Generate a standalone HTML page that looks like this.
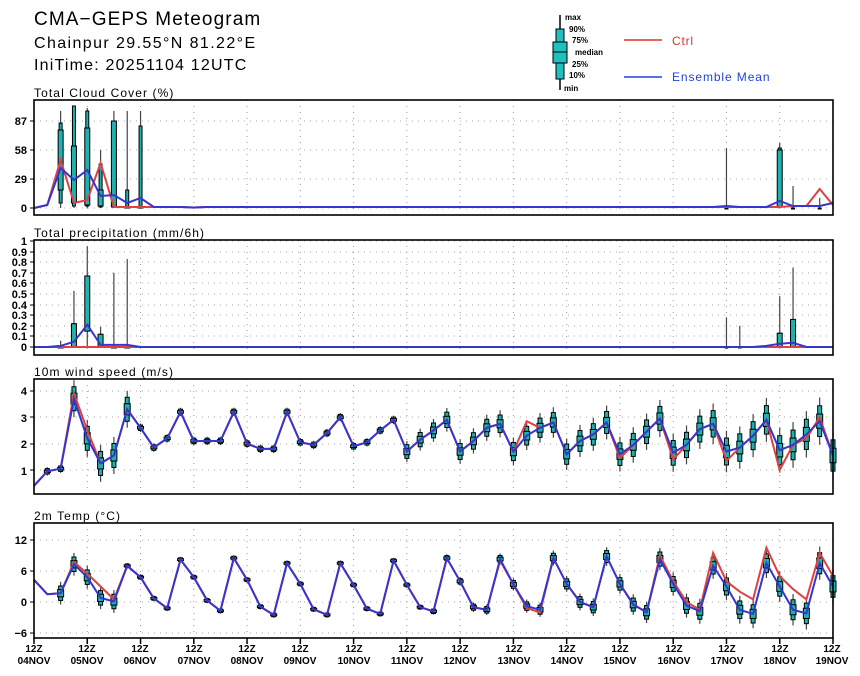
<!DOCTYPE html>
<html><head><meta charset="utf-8">
<style>
html,body{margin:0;padding:0;background:#fff;}
body{width:860px;height:676px;overflow:hidden;position:relative;font-family:"Liberation Sans","DejaVu Sans",sans-serif;}
svg{position:absolute;left:0;top:0;}
text{font-family:"Liberation Sans","DejaVu Sans",sans-serif;}
</style></head><body>
<svg id="s" width="860" height="676" viewBox="0 0 860 676">
<text x="34" y="25" font-size="19" letter-spacing="1.1" fill="#000">CMA−GEPS Meteogram</text>
<text x="34" y="48" font-size="16" letter-spacing="1.4" fill="#000">Chainpur 29.55°N 81.22°E</text>
<text x="34" y="70" font-size="16" letter-spacing="1.2" fill="#000">IniTime: 20251104 12UTC</text>
<g font-size="12" letter-spacing="1.1" fill="#000">
<text x="34" y="97">Total Cloud Cover (%)</text>
<text x="34" y="237">Total precipitation (mm/6h)</text>
<text x="34" y="376">10m wind speed (m/s)</text>
<text x="34" y="520">2m Temp (°C)</text>
</g>
<g font-size="11" font-weight="bold" text-anchor="end" fill="#000">
<text x="27" y="125">87</text><text x="27" y="154">58</text><text x="27" y="183">29</text><text x="27" y="212">0</text>
<text x="27" y="245">1</text><text x="27" y="256">0.9</text><text x="27" y="266">0.8</text><text x="27" y="277">0.7</text><text x="27" y="287">0.6</text><text x="27" y="298">0.5</text><text x="27" y="309">0.4</text><text x="27" y="319">0.3</text><text x="27" y="330">0.2</text><text x="27" y="340">0.1</text><text x="27" y="351">0</text>
<text x="27" y="395">4</text><text x="27" y="422">3</text><text x="27" y="448">2</text><text x="27" y="475">1</text>
<text x="27" y="544">12</text><text x="27" y="575">6</text><text x="27" y="606">0</text><text x="27" y="637">−6</text>
</g>
<g font-size="10" font-weight="bold" text-anchor="middle" fill="#000">
<text x="34" y="652">12Z</text><text x="34" y="664">04NOV</text>
<text x="87" y="652">12Z</text><text x="87" y="664">05NOV</text>
<text x="140" y="652">12Z</text><text x="140" y="664">06NOV</text>
<text x="194" y="652">12Z</text><text x="194" y="664">07NOV</text>
<text x="247" y="652">12Z</text><text x="247" y="664">08NOV</text>
<text x="300" y="652">12Z</text><text x="300" y="664">09NOV</text>
<text x="354" y="652">12Z</text><text x="354" y="664">10NOV</text>
<text x="407" y="652">12Z</text><text x="407" y="664">11NOV</text>
<text x="460" y="652">12Z</text><text x="460" y="664">12NOV</text>
<text x="514" y="652">12Z</text><text x="514" y="664">13NOV</text>
<text x="567" y="652">12Z</text><text x="567" y="664">14NOV</text>
<text x="620" y="652">12Z</text><text x="620" y="664">15NOV</text>
<text x="674" y="652">12Z</text><text x="674" y="664">16NOV</text>
<text x="727" y="652">12Z</text><text x="727" y="664">17NOV</text>
<text x="780" y="652">12Z</text><text x="780" y="664">18NOV</text>
<text x="832" y="652">12Z</text><text x="832" y="664">19NOV</text>
</g>
<line x1="560" y1="15" x2="560" y2="90" stroke="#000" stroke-width="1.5"/>
<rect x="556" y="29" width="8" height="50" fill="#20c0c0" stroke="#000"/>
<rect x="553" y="42" width="14" height="21" fill="#20c0c0" stroke="#000"/>
<line x1="553" y1="52" x2="567" y2="52" stroke="#000"/>
<g font-size="8" font-weight="bold" fill="#000">
<text x="565" y="20">max</text><text x="569" y="32">90%</text><text x="572" y="43">75%</text><text x="575" y="55">median</text><text x="572" y="67">25%</text><text x="569" y="78">10%</text><text x="564" y="91">min</text>
</g>
<line x1="624" y1="40" x2="662" y2="40" stroke="#e03030" stroke-width="1.5"/>
<text x="672" y="45" font-size="12" letter-spacing="0.8" fill="#e03030">Ctrl</text>
<line x1="624" y1="77" x2="662" y2="77" stroke="#2040e0" stroke-width="1.5"/>
<text x="672" y="81" font-size="12" letter-spacing="0.9" fill="#2040e0">Ensemble Mean</text>
<g id="g"></g>
</svg>
<script>
var g=document.getElementById('g'),h='';
var X0=34,X1=833,dx=(X1-X0)/60;
function px(i){return X0+i*dx;}
var panels=[{t:100,b:215,gy:[121,150,179,208]},{t:240,b:355,gy:[241,252,262,273,283,294,305,315,326,336,347]},{t:379,b:494,gy:[391,417,444,470]},{t:523,b:638,gy:[540,571,602,633]}];
panels.forEach(function(p){
 for(var d=1;d<15;d++){var x=X0+d*4*dx;h+='<line x1="'+x+'" y1="'+p.t+'" x2="'+x+'" y2="'+p.b+'" stroke="#999" stroke-dasharray="1,5"/>';}
 p.gy.forEach(function(y){h+='<line x1="'+X0+'" y1="'+y+'" x2="'+X1+'" y2="'+y+'" stroke="#aaa" stroke-dasharray="1,5"/>';h+='<line x1="'+(X0-4)+'" y1="'+y+'" x2="'+X0+'" y2="'+y+'" stroke="#000"/>';});
});
for(var d=0;d<=15;d++){var x=X0+d*4*dx;h+='<line x1="'+x+'" y1="638" x2="'+x+'" y2="644" stroke="#000" stroke-width="1.5"/>';}
function line(arr,f,col){var s='';arr.forEach(function(v,i){if(v!=null)s+=px(i).toFixed(1)+','+f(v).toFixed(1)+' ';});return '<polyline points="'+s+'" fill="none" stroke="'+col+'" stroke-width="2"/>';}
function box(i,f,lo,q1,q3,hi,mn,mx,w){var x=px(i);var r='';
 r+='<line x1="'+x+'" y1="'+f(mx)+'" x2="'+x+'" y2="'+f(mn)+'" stroke="#444" stroke-width="1.2"/>';
 r+='<rect x="'+(x-(w||2))+'" y="'+f(hi)+'" width="'+2*(w||2)+'" height="'+Math.max(1,f(lo)-f(hi))+'" fill="#20b0b0" stroke="#000" stroke-width="1"/>';
 r+='<rect x="'+(x-(w||2)-1)+'" y="'+f(q3)+'" width="'+(2*(w||2)+2)+'" height="'+Math.max(1,f(q1)-f(q3))+'" fill="#20b0b0" stroke="#000" stroke-width="1"/>';
 return r;}
var ft=function(v){return 602-v*5.17;};
var days=[[7.3,4.8,0.8,0.1],[7.0,4.8,0.7,-1.2],[8.2,4.8,0.3,-1.7],[8.5,4.3,-0.9,-2.5],[7.5,3.5,-1.4,-2.5],[7.5,3.3,-1.3,-2.3],[8.0,3.3,-1.0,-1.8],[8.5,4.0,-1.0,-1.5],[8.3,3.4,-0.8,-1.5],[8.5,3.5,0.0,-1.0],[8.8,3.5,-0.5,-2.0],[8.3,3.5,-0.7,-1.8],[7.0,3.0,-1.5,-2.3],[7.5,3.0,-1.5,-2.2],[7.5,3.0]];
var ctrlAdj=[[0.4,0.7,2.2,0.4],[0,0,0,0],[0,0,0,0],[0,0,0,0],[0,0,0,0],[0,0,0,0],[0,0,0,0],[0,0,0,0],[-0.3,0,-0.4,-0.5],[0,0,0,0],[0,0,0,0],[0.7,0.5,0.7,0.3],[2.5,1,3.5,2.8],[3,2,4,2.7],[2,2]];
var tm=[4.3,1.5,1.7],tc=[4.3,1.5,1.7];
days.forEach(function(d,k){d.forEach(function(v,j){tm.push(v);tc.push(v+ctrlAdj[k][j]);});});
var tb='';for(var i=2;i<61;i++){var sp=i<7?1.0:(i<30?0.25:0.3+(i-30)*0.04);var m=tm[i];tb+=box(i,ft,m-sp*1.4,m-sp*0.7,m+sp*0.7,m+sp*1.4,m-sp*2.2,m+sp*2.2);}
h+=tb+line(tc,ft,'#e04040')+line(tm,ft,'#3535d0');
var fw=function(v){return 470-(v-1)*26.4;};
var wm=[0.4,0.95,1.05,3.7,2.2,1.25,1.55,3.3,2.6,1.85,2.2,3.2,2.1,2.1,2.1,3.2,2.0,1.8,1.8,3.2,2.05,1.95,2.4,3.0,1.9,2.05,2.5,2.9,1.7,2.15,2.5,2.9,1.7,2.1,2.6,2.75,1.7,2.3,2.6,2.8,1.6,2.1,2.35,2.8,1.6,1.95,2.45,2.95,1.65,1.95,2.55,2.75,1.7,1.85,2.3,2.9,1.75,1.95,2.35,2.85,1.55];
var wc=wm.slice();wc[3]=3.9;wc[4]=2.5;wc[37]=2.85;wc[44]=1.45;wc[48]=1.4;wc[52]=1.35;wc[56]=1.0;wc[58]=2.2;wc[59]=3.0;
var wb='';for(var i=1;i<61;i++){var sp=(i>=3&&i<=7)?0.35:(i<28?0.08:0.2+(i-28)*0.008);var m=wm[i];wb+=box(i,fw,m-sp*1.3,m-sp*0.6,m+sp*0.6,m+sp*1.3,m-sp*2,m+sp*2);}
h+=wb+line(wc,fw,'#e04040')+line(wm,fw,'#3535d0');
var fc=function(v){return 208-v;};
var cm=[0,3,40,28,38,12,13,5,10,1,1,1,0.5];while(cm.length<61)cm.push(1);cm[52]=2;cm[56]=7;cm[57]=2;cm[58]=2;cm[59]=2;cm[60]=5;
var cc=cm.slice();cc[2]=48;cc[3]=5;cc[4]=8;cc[5]=45;cc[6]=1;cc[7]=1;cc[8]=1;cc[56]=1;cc[59]=19;cc[60]=3;cc[52]=1;
var cb='';
[[2,5,18,78,85,97],[3,2,5,62,102,102],[4,2,3,80,97,100],[5,1,2,18,44,58],[6,1,1,87,87,97],[7,1,1,1,18,97],[8,1,1,1,82,97]].forEach(function(a){cb+=box(a[0],fc,a[1],a[2],a[3],a[4],0,a[5],1.5);});
cb+=box(52,fc,0,0,0,0,0,60,0.5)+box(56,fc,1,1,58,60,0,65,1.5)+box(57,fc,0,0,0,0,0,22,0.5)+box(59,fc,0,0,0,0,0,10,0.5);
h+=cb+line(cc,fc,'#e04040')+line(cm,fc,'#3535d0');
var fp=function(v){return 347-v*106;};
var pm=[0,0,0.01,0.05,0.21,0.02,0.02,0.02,0];while(pm.length<61)pm.push(0);pm[55]=0.01;pm[56]=0.03;pm[57]=0.04;
var pc=pm.map(function(){return 0;});
var pb='';
[[2,0,0,0,0.06],[3,0,0,0.22,0.53],[4,0.15,0.15,0.67,0.95],[5,0,0,0.12,0.19],[6,0,0,0,0.7],[7,0,0,0,0.83]].forEach(function(a){pb+=box(a[0],fp,a[1],a[2],a[3],a[3],0,a[4],1.5);});
pb+=box(52,fp,0,0,0,0,0,0.28,0.3)+box(53,fp,0,0,0,0,0,0.2,0.3)+box(56,fp,0,0,0.13,0.13,0,0.48,1.5)+box(57,fp,0,0,0.26,0.26,0,0.75,1.5);
h+=pb+line(pc,fp,'#e04040')+line(pm,fp,'#3535d0');
panels.forEach(function(p){h+='<rect x="'+X0+'" y="'+p.t+'" width="'+(X1-X0)+'" height="'+(p.b-p.t)+'" fill="none" stroke="#000" stroke-width="1.6"/>';});
g.innerHTML=h;
</script>
</body></html>
